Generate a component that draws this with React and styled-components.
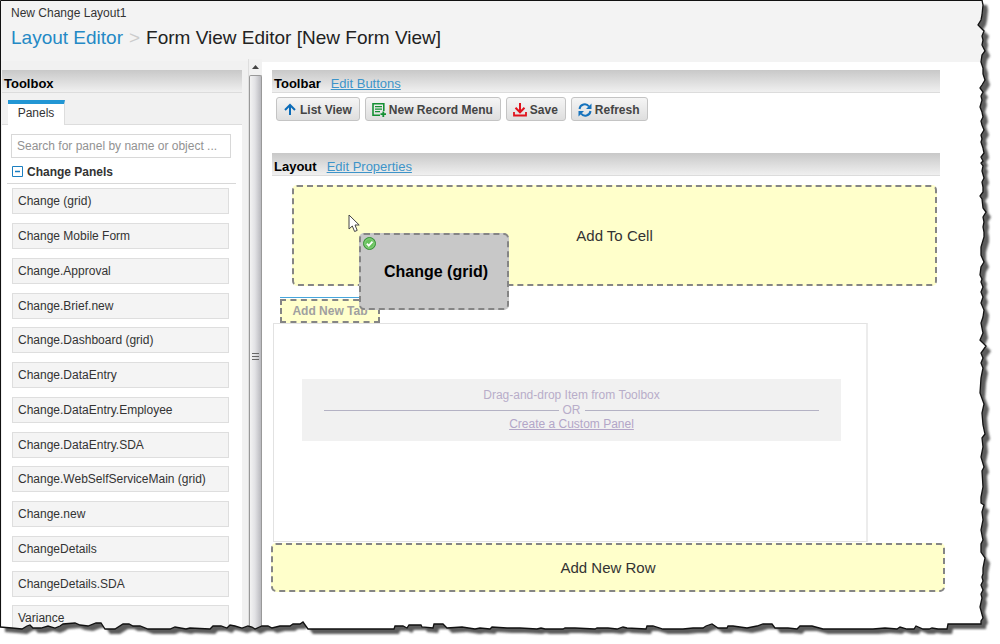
import React from "react";
import styled, { createGlobalStyle, css } from "styled-components";

const GlobalStyle = createGlobalStyle`
  *, *::before, *::after { box-sizing: border-box; }
  body {
    margin: 0;
    background: #fff;
    color: #333;
    font: 12px/16px "Liberation Sans", Arial, sans-serif;
  }
  h1, h2, p, ul { margin: 0; padding: 0; font: inherit; }
  ul { list-style: none; }
  button, input { font: inherit; color: inherit; margin: 0; }
`;

const Page = styled.div`
  position: relative;
  display: flex;
  flex-direction: column;
  min-height: 100vh;
  padding: 1px 0 0 1px;
  overflow: hidden;
`;

const Header = styled.header`
  height: 60px;
  padding: 4px 10px;
  background: #f3f3f3;
`;

const Title = styled.h1`
  display: flex;
  gap: 6px;
  padding-top: 5px;
  font-size: 19px;
  line-height: 24px;
  color: #222;
`;

const Crumb = styled.a`
  color: #2489c5;
  text-decoration: none;
`;

const Separator = styled.span`
  color: #ccc;
`;

const Body = styled.div`
  display: flex;
  flex: 1;
`;

const Sidebar = styled.aside`
  display: flex;
  flex-direction: column;
  flex: none;
  width: 247px;
  padding: 9px 6px 0 1px;
  background: #f1f1f1;
`;

const Bar = styled.div`
  display: flex;
  align-items: center;
  height: 23px;
  padding: 5px 2px 0;
  background: linear-gradient(#c8c8c8, #f0f0f0);
  border-bottom: 1px solid #dcdcdc;
`;

const BarTitle = styled.h2`
  font-size: 13px;
  font-weight: bold;
  color: #000;
`;

const BarLink = styled.a`
  font-size: 13px;
  margin-left: 10px;
  color: #3d94c9;
`;

const Tabs = styled.div`
  display: flex;
  padding: 7px 6px 0;
  border-bottom: 1px solid #ddd;
`;

const Tab = styled.button`
  width: 57px;
  height: 25px;
  margin-bottom: -1px;
  padding: 0 0 4px;
  border: 0;
  border-top: 4px solid #2296d4;
  border-right: 1px solid #ddd;
  background: #fff;
`;

const PanelList = styled.div`
  flex: 1;
  padding: 9px 6px 0 5px;
  background: #fff;
`;

const Search = styled.input`
  display: block;
  width: 220px;
  height: 24px;
  margin-left: 4px;
  padding: 0 5px;
  border: 1px solid #d8d8d8;
  background: #fff;
  &::placeholder { color: #929292; opacity: 1; }
`;

const GroupToggle = styled.button`
  display: flex;
  align-items: center;
  gap: 4px;
  width: 100%;
  height: 26px;
  padding: 2px 5px 0;
  border: 0;
  border-bottom: 1px solid #d8d8d8;
  background: none;
  font-weight: bold;
`;

const Items = styled.ul`
  padding: 4px 0 0 5px;
`;

const Item = styled.li`
  display: flex;
  align-items: center;
  width: 217px;
  height: 26px;
  margin-bottom: 9px;
  padding: 0 5px;
  border: 1px solid #dedede;
  background: #f4f4f4;
  &:nth-child(4n) { margin-bottom: 8px; }
`;

const ScrollTrack = styled.div`
  display: flex;
  flex-direction: column;
  flex: none;
  width: 14px;
  margin-top: -2px;
  background: #f1f1f1;
  border-left: 1px solid #dedede;
`;

const ScrollArrow = styled.div`
  display: flex;
  align-items: center;
  justify-content: center;
  height: 16px;
`;

const ScrollThumb = styled.div`
  display: flex;
  align-items: center;
  justify-content: center;
  flex: 1;
  padding-bottom: 6px;
  border: 1px solid #999;
  border-bottom: 0;
  border-radius: 2px 2px 0 0;
  background: linear-gradient(90deg, #f3f3f3, #e2e2e5 45%, #b9b9be);
`;

const Main = styled.main`
  flex: 1;
  min-width: 0;
  padding: 8px 55px 0 9px;
  border-top: 1px solid #f3f3f3;
  background: #fff;
`;

const Section = styled.section`
  padding: 0 5px 0 1px;
`;

const Buttons = styled.div`
  display: flex;
  gap: 5px;
  padding: 4px 4px 32px;
`;

const ToolButton = styled.button`
  display: flex;
  align-items: center;
  gap: 3px;
  height: 24px;
  padding: 1px 7px 0 6px;
  border: 1px solid #c4c4c4;
  border-radius: 3px;
  background: linear-gradient(#f5f5f5, #dedede);
  color: #444;
  font-weight: bold;
  white-space: nowrap;
`;

const dashed = css`
  border: 2px dashed #858585;
  border-radius: 5px;
`;

const DropZone = styled.div`
  ${dashed}
  position: relative;
  display: flex;
  align-items: center;
  justify-content: center;
  height: ${(p) => p.$height};
  margin: ${(p) => p.$margin || 0};
  background: #ffffcb;
  font-size: 15px;
`;

const Ghost = styled.div`
  ${dashed}
  position: absolute;
  z-index: 2;
  left: 65px;
  top: 46px;
  display: flex;
  align-items: center;
  justify-content: center;
  width: 150px;
  height: 77px;
  background: #c8c8c8;
  color: #000;
  font-size: 16px;
  font-weight: bold;
  padding-left: 4px;
`;

const GhostMark = styled.svg`
  position: absolute;
  left: 2px;
  top: 2px;
`;

const Pointer = styled.svg`
  position: absolute;
  left: 54px;
  top: 27px;
`;

const NewTab = styled.button`
  display: block;
  width: 100px;
  height: 26px;
  margin-left: 9px;
  padding: 0;
  border: 0;
  border-top: 1px solid #45a6dc;
  background: none;
  color: #a0a0a0;
  font-weight: bold;
`;

const NewTabZone = styled.span`
  display: block;
  height: 24px;
  margin-top: 1px;
  border: 2px dashed #858585;
  background: #ffffcb;
  font-size: 12px;
  line-height: 20px;
`;

const Cell = styled.div`
  height: 219px;
  margin: 0 77px 1px 2px;
  padding: 55px 25px 0 28px;
  border: 1px solid #e2e2e2;
  border-right: 2px solid #ececec;
`;

const Placeholder = styled.div`
  height: 62px;
  padding: 9px 22px 0;
  background: #f1f1f1;
  color: #b8adc9;
  line-height: 15px;
  text-align: center;
`;

const Or = styled.p`
  display: flex;
  align-items: center;
  gap: 4px;
  line-height: 14px;
  &::before, &::after {
    content: "";
    flex: 1;
    height: 1px;
    background: #b4b2c4;
  }
`;

const CustomLink = styled.a`
  color: #b3a6c8;
`;

const Tear = styled.svg`
  position: absolute;
  z-index: 5;
  left: 0;
  top: 0;
  width: 100%;
  height: 100%;
  pointer-events: none;
`;

const panels = [
  "Change (grid)",
  "Change Mobile Form",
  "Change.Approval",
  "Change.Brief.new",
  "Change.Dashboard (grid)",
  "Change.DataEntry",
  "Change.DataEntry.Employee",
  "Change.DataEntry.SDA",
  "Change.WebSelfServiceMain (grid)",
  "Change.new",
  "ChangeDetails",
  "ChangeDetails.SDA",
  "Variance",
];

const rightEdge =
  "982,0 983,5 982,15 981,20 978,25 980,27 982,29 984,31 982,36 983,40 982,45 985,51 982,55 981,62 983,68 983,74 985,80 982,85 980,88 983,92 981,96 982,100 980,107 982,112 983,117 981,121 982,125 984,130 981,135 982,139 981,142 983,148 984,153 981,157 983,161 981,163 983,166 982,171 984,178 982,182 983,187 983,192 980,196 982,199 983,208 986,212 983,217 984,222 983,227 984,232 984,237 981,247 981,255 984,262 981,267 980,275 982,279 981,282 983,287 981,292 983,297 981,303 984,310 983,317 981,323 983,333 980,340 986,346 981,353 983,358 981,363 983,368 981,378 980,393 984,404 982,413 983,425 985,434 982,438 983,447 981,457 984,467 982,471 983,487 981,497 981,503 984,505 982,512 983,520 981,530 983,540 981,544 981,552 985,558 983,568 983,574 982,577 983,581 981,585 983,590 981,594 982,598 980,607 983,618 981,621 981,624";
const bottomEdge =
  "948,624 947,629 938,629 932,628 929,629 923,629 916,626 914,629 907,629 900,627 897,629 885,628 873,629 823,629 812,626 800,626 797,629 788,628 775,628 772,624 763,624 757,626 747,628 733,626 728,626 727,628 718,628 712,624 706,626 703,628 693,628 683,629 663,629 653,626 647,626 646,629 627,628 623,627 617,629 608,628 597,628 595,629 575,628 565,628 563,629 545,629 541,628 537,629 520,628 507,628 492,627 490,629 480,628 475,629 462,627 447,628 443,624 434,624 433,628 422,627 421,625 409,625 407,628 403,626 395,626 394,629 370,629 350,629 328,629 308,629 303,622 300,624 293,624 290,626 280,626 272,628 268,626 262,626 255,629 252,627 248,626 242,628 235,626 230,625 227,628 221,626 213,626 210,629 190,628 186,629 175,627 170,629 148,629 140,626 133,626 129,624 123,624 115,629 105,629 101,623 96,623 88,626 80,625 75,623 63,624 60,626 55,628 48,626 41,628 33,628 30,625 27,626 22,629 12,628 0,627";
const pageOutline = `M0,0 L${rightEdge} ${bottomEdge} Z`;
const outside = `M0,0 H1000 V644 H0 Z ${pageOutline}`;

function TornEdge() {
  return (
    <Tear viewBox="0 0 1000 644" preserveAspectRatio="none" aria-hidden="true">
      <defs>
        <clipPath id="outside">
          <path d={outside} clipRule="evenodd" />
        </clipPath>
        <filter id="soften" x="-5%" y="-5%" width="110%" height="110%">
          <feGaussianBlur stdDeviation="1.3" />
        </filter>
      </defs>
      <path d={outside} fill="#fff" fillRule="evenodd" />
      <g clipPath="url(#outside)">
        <path d={pageOutline} transform="translate(5 5)" fill="#5c5c5c" filter="url(#soften)" />
      </g>
      <path d={`M${rightEdge} ${bottomEdge}`} fill="none" stroke="#111" strokeWidth="1.3" />
      <path d="M.5 627V.5H982" fill="none" stroke="#111" />
    </Tear>
  );
}

const ArrowUpIcon = () => (
  <svg width="14" height="14" viewBox="0 0 14 14" fill="none" stroke="#0c6cb8" strokeWidth="2">
    <path d="M7 12V2.5M2 7l5-5 5 5" />
  </svg>
);

const RecordIcon = () => (
  <svg width="14" height="14" viewBox="0 0 14 14" fill="none" stroke="#149033">
    <path d="M8 12.2H1V.8h10.800V8" strokeWidth="1.6" />
    <path d="M3 3.700h7M3 6.200h7M3 8.700h5" strokeWidth="1.2" />
    <path d="M11.300 8.500v5.500M8.500 11.200H14" strokeWidth="1.8" />
  </svg>
);

const SaveIcon = () => (
  <svg width="14" height="14" viewBox="0 0 14 14" fill="none" stroke="#e0121c" strokeWidth="2">
    <path d="M7 0v9M2.500 4.800L7 9.300l4.500-4.500" />
    <path d="M1 9v3.500h12V9" strokeWidth="1.800" />
  </svg>
);

const RefreshIcon = () => (
  <svg width="14" height="14" viewBox="0 0 14 14" fill="none" stroke="#1673bd" strokeWidth="2">
    <path d="M1.500 6A5.300 5.300 0 0 1 11 3.500M12.500 8A5.300 5.300 0 0 1 3 10.500" />
    <path d="M13.500 0.500v5.500H8ZM0.500 13.500V8H6Z" fill="#1673bd" stroke="none" />
  </svg>
);

export default function App() {
  return (
    <>
      <GlobalStyle />
      <Page>
        <Header>
          <p>New Change Layout1</p>
          <Title>
            <Crumb href="#layout-editor">Layout Editor</Crumb>
            <Separator>&gt;</Separator>
            <span>Form View Editor [New Form View]</span>
          </Title>
        </Header>
        <Body>
          <Sidebar>
            <Bar>
              <BarTitle>Toolbox</BarTitle>
            </Bar>
            <Tabs role="tablist">
              <Tab type="button" role="tab" aria-selected="true">Panels</Tab>
            </Tabs>
            <PanelList>
              <Search
                type="text"
                aria-label="Search for panel"
                placeholder="Search for panel by name or object ..."
              />
              <GroupToggle type="button" aria-expanded="true">
                <svg width="11" height="11" viewBox="0 0 11 11" fill="none" stroke="#1c7fc0">
                  <path d="M.5.5h10v10H.5z" />
                  <path d="M3 5.500h5" strokeWidth="1.500" />
                </svg>
                Change Panels
              </GroupToggle>
              <Items>
                {panels.map((name) => (
                  <Item key={name} draggable>{name}</Item>
                ))}
              </Items>
            </PanelList>
          </Sidebar>
          <ScrollTrack aria-hidden="true">
            <ScrollArrow>
              <svg width="7" height="4" viewBox="0 0 7 4"><path d="M0 4l3.500-4L7 4z" fill="#444" /></svg>
            </ScrollArrow>
            <ScrollThumb>
              <svg width="7" height="8" viewBox="0 0 7 8" stroke="#666">
                <path d="M0 .5h7M0 3.500h7M0 6.500h7" />
              </svg>
            </ScrollThumb>
          </ScrollTrack>
          <Main>
            <Section>
              <Bar>
                <BarTitle>Toolbar</BarTitle>
                <BarLink href="#buttons">Edit Buttons</BarLink>
              </Bar>
              <Buttons>
                <ToolButton type="button"><ArrowUpIcon />List View</ToolButton>
                <ToolButton type="button"><RecordIcon />New Record Menu</ToolButton>
                <ToolButton type="button"><SaveIcon />Save</ToolButton>
                <ToolButton type="button"><RefreshIcon />Refresh</ToolButton>
              </Buttons>
            </Section>
            <Section>
              <Bar>
                <BarTitle>Layout</BarTitle>
                <BarLink href="#properties">Edit Properties</BarLink>
              </Bar>
            </Section>
            <DropZone $height="101px" $margin="9px 8px 11px 21px">
              Add To Cell
              <Pointer width="12" height="19" viewBox="0 0 12 19" aria-hidden="true">
                <path d="M1 1v14l3.300-3 2.300 5.500 2.600-1.100L7 11h4.200z" fill="#fff" stroke="#444" />
              </Pointer>
              <Ghost>
                <GhostMark width="13" height="13" viewBox="0 0 13 13" aria-hidden="true">
                  <circle cx="6.500" cy="6.500" r="6" fill="#4bad45" stroke="#3b933a" />
                  <circle cx="6.500" cy="6.500" r="4.800" fill="#67c25c" stroke="#a3dc9b" strokeWidth=".7" />
                  <path d="M3.800 6.700l2 2 3.700-4" fill="none" stroke="#fff" strokeWidth="1.800" />
                </GhostMark>
                Change (grid)
              </Ghost>
            </DropZone>
            <NewTab type="button">
              <NewTabZone>Add New Tab</NewTabZone>
            </NewTab>
            <Cell>
              <Placeholder>
                <p>Drag-and-drop Item from Toolbox</p>
                <Or>OR</Or>
                <CustomLink href="#custom-panel">Create a Custom Panel</CustomLink>
              </Placeholder>
            </Cell>
            <DropZone $height="49px">Add New Row</DropZone>
          </Main>
        </Body>
        <TornEdge />
      </Page>
    </>
  );
}
